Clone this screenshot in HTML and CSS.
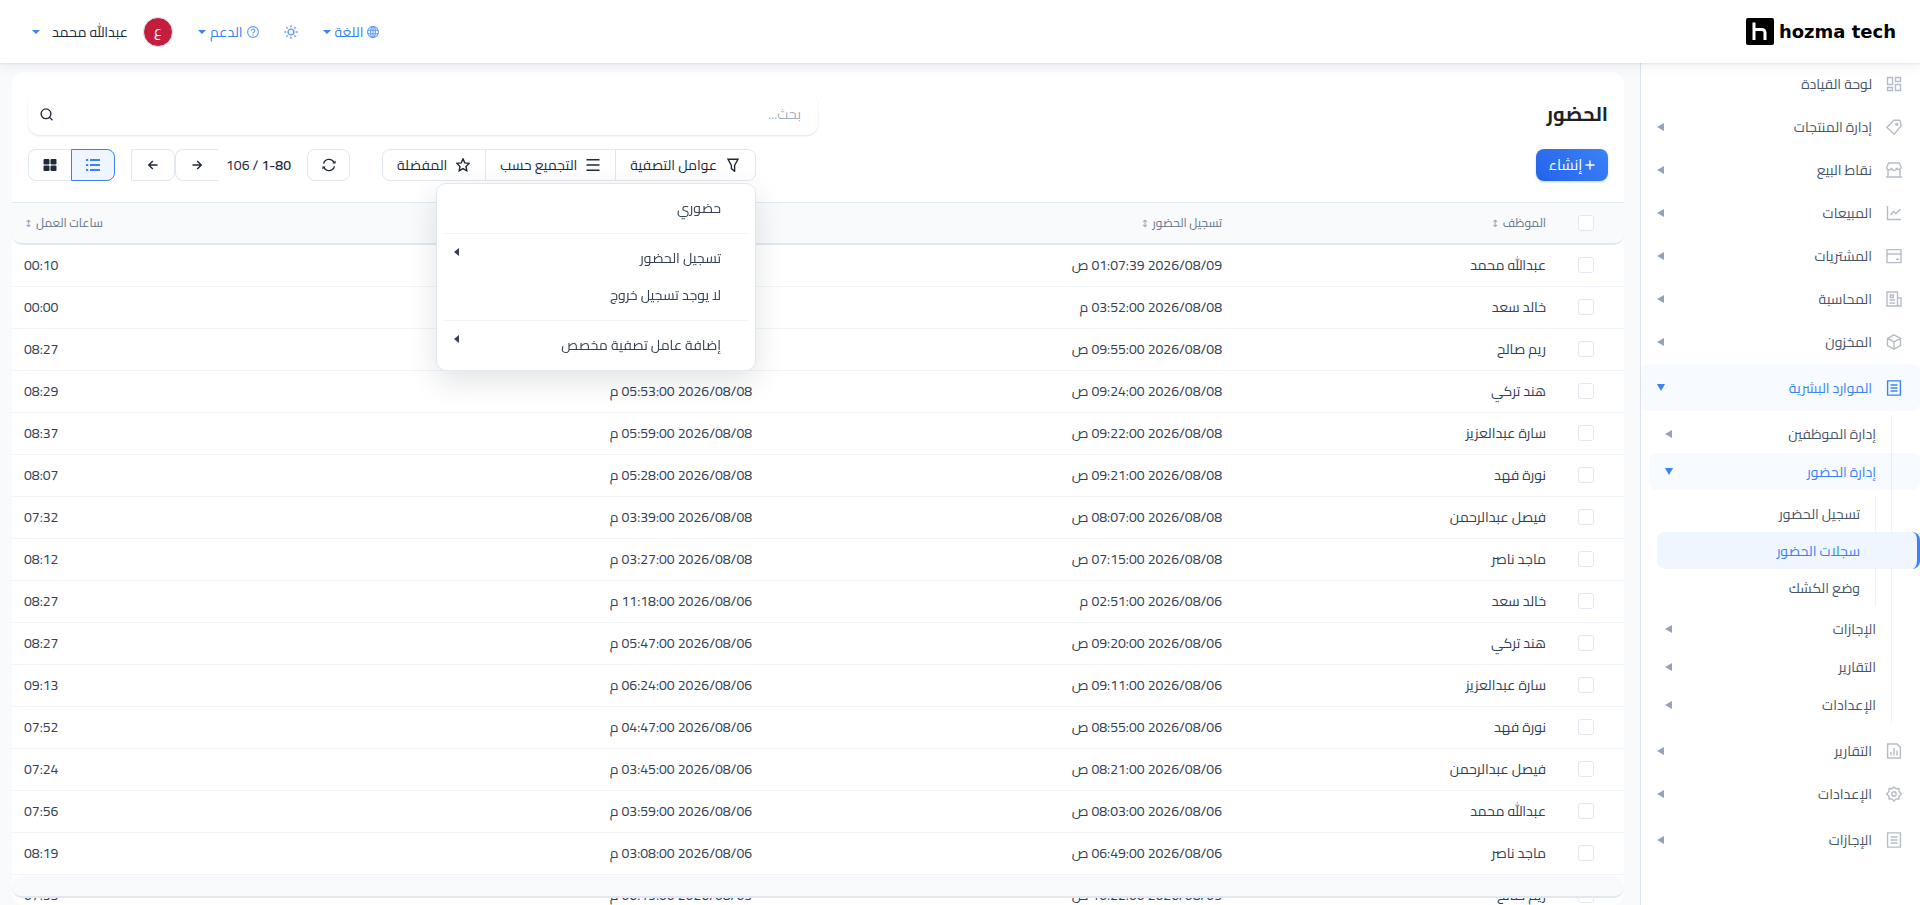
FILE: index.html
```html
<!DOCTYPE html>
<html lang="ar" dir="rtl">
<head>
<meta charset="utf-8">
<meta name="viewport" content="width=device-width, initial-scale=1">
<title>الحضور</title>
<link rel="stylesheet" href="styles.css">
</head>
<body>
<header class="topbar">
  <a class="brand" href="#" aria-label="hozma tech">
    <svg class="brand-mark" viewBox="0 0 28 28"><rect width="28" height="27" rx="2" fill="#000"/><g fill="none" stroke="#fff" stroke-width="3"><path d="M8 4.500V22"/><path d="M8 11.500h8a3 3 0 0 1 3 3V22"/></g></svg>
    <span class="brand-name">hozma tech</span>
  </a>
  <nav class="topnav">
    <button class="top-btn"><svg class="i12" viewBox="0 0 12 12"><circle cx="6" cy="6" r="5.400"/><ellipse cx="6" cy="6" rx="2.400" ry="5.400"/><path d="M.8 4.200h10.400M.8 7.800h10.400M6 .6v10.800"/></svg>اللغة<i class="caret"></i></button>
    <button class="top-btn sun" aria-label="المظهر"><svg class="i14" viewBox="0 0 14 14"><circle cx="7" cy="7" r="2.900"/><path d="M7 .3v2M7 11.700v2M.3 7h2M11.700 7h2M2.300 2.300l1.300 1.300M10.400 10.400l1.300 1.300M2.300 11.700l1.300-1.300M10.400 3.600l1.300-1.300"/></svg></button>
    <button class="top-btn"><svg class="i12" viewBox="0 0 12 12"><circle cx="6" cy="6" r="5.400"/><path d="M4.300 4.800a1.700 1.600 0 1 1 2.500 1.400c-.6.300-.8.500-.8 1.200M6 8.200v1.200"/></svg>الدعم<i class="caret"></i></button>
    <button class="user-btn"><span class="avatar">ع</span><span class="user-name">عبدالله محمد</span><i class="caret"></i></button>
  </nav>
</header>
<div class="shell">
  <aside class="sidebar">
    <ul class="menu" id="menu"></ul>
  </aside>
  <main class="content">
    <section class="card">
      <div class="page-head">
        <h1>الحضور</h1>
        <label class="search"><input type="text" placeholder="بحث..." aria-label="بحث"><button aria-label="بحث"><svg class="i13" viewBox="0 0 13 13"><circle cx="6" cy="5.800" r="4.900"/><path d="M9.600 9.400l2.800 2.800"/></svg></button></label>
      </div>
      <div class="toolbar">
        <button class="create"><svg class="i10" viewBox="0 0 10 10"><path d="M5 .5v9M.5 5h9"/></svg>إنشاء</button>
        <div class="tools">
          <div class="filters">
            <button><svg class="i14" viewBox="0 0 14 14"><path d="M2 1.300h10L8.600 7.400v5.800L5.400 10.600V7.400z"/></svg>عوامل التصفية</button>
            <button><svg class="i14" viewBox="0 0 14 14"><path d="M.5 1.800h13M.5 7h13M.5 12.200h13"/></svg>التجميع حسب</button>
            <button><svg class="i14" viewBox="0 0 14 14"><path d="M7 .9l1.800 4 4.400.5-3.200 3 .8 4.400L7 10.600l-3.800 2.200.8-4.400-3.200-3 4.400-.5z"/></svg>المفضلة</button>
            <div class="dropdown">
              <a href="#">حضوري</a>
              <hr>
              <a href="#" class="more">تسجيل الحضور</a>
              <a href="#">لا يوجد تسجيل خروج</a>
              <hr>
              <a href="#" class="more">إضافة عامل تصفية مخصص</a>
            </div>
          </div>
          <button class="box refresh" aria-label="تحديث"><svg class="i14" viewBox="0 0 14 14"><path d="M1.600 5.600A5.500 5.500 0 0 1 12 4.700M12.400 8.400A5.500 5.500 0 0 1 2 9.300"/><path fill="currentColor" stroke="none" d="M10.200 5.600h3.400V2.400zM3.800 8.400H.4v3.200z"/></svg></button>
          <div class="pager"><b>1-80</b> / 106</div>
          <button class="box prev" aria-label="السابق"><svg class="i10" viewBox="0 0 10 10"><path d="M.5 5h8.800M5.200.9L9.300 5 5.200 9.100"/></svg></button>
          <button class="box next" aria-label="التالي"><svg class="i10" viewBox="0 0 10 10"><path d="M9.500 5H.7M4.800.9L.7 5l4.100 4.100"/></svg></button>
          <button class="box list on" aria-label="قائمة"><svg class="i14" viewBox="0 0 14 14"><path stroke-width="2" d="M4 2h10M4 7h10M4 12h10M0 2h2.200M0 7h2.200M0 12h2.200"/></svg></button>
          <button class="box tiles" aria-label="بطاقات"><svg class="i14" viewBox="0 0 14 14"><g fill="currentColor" stroke="none"><rect x=".5" y="1" width="6" height="5.500" rx="1"/><rect x="7.500" y="1" width="6" height="5.500" rx="1"/><rect x=".5" y="7.500" width="6" height="5.500" rx="1"/><rect x="7.500" y="7.500" width="6" height="5.500" rx="1"/></g></svg></button>
        </div>
      </div>
      <div class="table-wrap">
        <table>
          <colgroup><col class="c-check"><col class="c-name"><col class="c-in"><col></colgroup>
          <thead><tr>
            <th class="check"><input type="checkbox" aria-label="تحديد الكل"></th>
            <th>الموظف <span class="sort">↕</span></th>
            <th>تسجيل الحضور <span class="sort">↕</span></th>
            <th></th>
            <th class="end">ساعات العمل <span class="sort">↕</span></th>
          </tr></thead>
          <tbody id="rows"></tbody>
          <tfoot><tr><td colspan="5"></td></tr></tfoot>
        </table>
      </div>
    </section>
  </main>
</div>
<script src="app.js"></script>
</body>
</html>
```
FILE: styles.css
```css
* { box-sizing: border-box; }
:root {
  --blue: #3b82f6;
  --line: #e2e8f0;
  --ink: #1e293b;
  --text: #334155;
  --font: Cairo, "Noto Kufi Arabic", "Noto Sans Arabic", Roboto, "DejaVu Sans", sans-serif;
}
body {
  margin: 0;
  height: 100vh;
  display: flex;
  flex-direction: column;
  overflow: hidden;
  background: #f8fafc;
  color: var(--text);
  font: 14px/20px var(--font);
}
button, input { font: inherit; color: inherit; }
button { background: none; border: 0; padding: 0; cursor: pointer; display: flex; align-items: center; justify-content: center; }
a { color: inherit; text-decoration: none; }
ul { list-style: none; margin: 0; padding: 0; }
svg { fill: none; stroke: currentColor; flex: none; display: block; }
.i10 { width: 10px; height: 10px; stroke-width: 1.400; }
.i12 { width: 12px; height: 12px; stroke-width: 1.100; }
.i13 { width: 13px; height: 13px; }
.i14 { width: 14px; height: 14px; stroke-width: 1.400; }
.i16 { width: 16px; height: 16px; }

.topbar {
  height: 63px;
  flex: none;
  display: flex;
  align-items: center;
  justify-content: space-between;
  padding: 0 24px 0 32px;
  background: #fff;
  box-shadow: 0 1px 2px rgba(15, 23, 42, .08), 0 4px 12px rgba(15, 23, 42, .05);
  position: relative;
  z-index: 3;
}
.brand { display: flex; align-items: center; gap: 5px; direction: ltr; color: #000; }
.brand-mark { width: 28px; height: 28px; stroke: none; }
.brand-name { font: 700 18px/28px "DejaVu Sans", sans-serif; }
.topnav { display: flex; align-items: center; gap: 25px; }
.top-btn { color: var(--blue); gap: 4px; }
.top-btn svg { opacity: .8; }
.caret { border: 4px solid transparent; border-top-color: var(--blue); border-bottom: 0; }
.user-btn { color: var(--ink); }
.avatar {
  width: 30px; height: 30px; border-radius: 50%;
  border: 1px solid var(--line);
  background: #c41e3f; color: #fff; line-height: 26px; text-align: center;
}
.user-name { margin: 0 15px 0 12px; }

.shell { flex: 1; min-height: 0; display: flex; }
.sidebar { width: 280px; flex: none; background: #fff; border-left: 1px solid #dbe4ee; overflow: hidden; color: #475569; }
.item { display: flex; align-items: center; height: 43px; padding: 0 18px 2px 16px; gap: 14px; border-radius: 8px; }
.item svg { color: #b4bccb; stroke-width: 1.400; }
.item.tall { height: 47px; padding-bottom: 0; }
.item::after { content: ""; margin-right: auto; border: 4px solid transparent; border-right: 7px solid #94a3b8; border-left: 0; }
.item.leaf::after { display: none; }
.item.open { color: var(--blue); background: rgba(59, 130, 246, .04); }
.item.open svg { color: var(--blue); }
.item.open::after { border: 4px solid transparent; border-top: 7px solid var(--blue); border-bottom: 0; }
.sub { margin: 4px 0 7px; background: linear-gradient(#eef1f5, #eef1f5) right 28px top / 1px 100% no-repeat; }
.sub .item { height: 37px; margin: 0 0 1px 8px; padding: 0 44px 0 16px; }
.deep { margin: 5px 0 4px; background: linear-gradient(#eef1f5, #eef1f5) right 44px top / 1px 100% no-repeat; }
.deep .item { margin: 0 0 0 16px; padding-right: 60px; }
.deep .item.current { color: var(--blue); background: #eff6ff; border-right: 3px solid var(--blue); padding-right: 57px; }

.content { flex: 1; min-width: 0; padding: 9px 16px 0 12px; }
.card { height: 100%; display: flex; flex-direction: column; background: #fff; border-radius: 12px; overflow: hidden; }
.page-head { display: flex; align-items: center; justify-content: space-between; padding: 20px 16px 14px; }
h1 { margin: 0; font-size: 20px; line-height: 32px; font-weight: 700; color: #1f2225; }
.search { width: 50%; height: 43px; display: flex; align-items: center; border-radius: 12px; padding: 1px 17px 0 12px; box-shadow: 0 1px 2px rgba(15, 23, 42, .12); }
.search input { flex: 1; min-width: 0; border: 0; outline: 0; background: none; padding: 0; }
.search input::placeholder { color: #a3afbf; opacity: 1; }
.search svg { stroke-width: 1.300; color: var(--ink); }

.toolbar { display: flex; justify-content: space-between; padding: 0 16px 21px; color: var(--ink); }
.create { width: 72px; height: 32px; gap: 3px; border-radius: 8px; color: #fff; font-size: 15px; background: linear-gradient(225deg, #3b82f6, #2563eb); box-shadow: 0 1px 2px rgba(37, 99, 235, .3); }
.tools { display: flex; }
.filters { position: relative; display: flex; height: 32px; border: 1px solid var(--line); border-radius: 8px; }
.filters > button { gap: 9px; padding: 0 15px 0 14px; }
.filters > button + button { border-right: 1px solid var(--line); }
.dropdown {
  position: absolute; top: 33px; right: -1px; width: 320px; z-index: 2;
  padding: 6px; background: #fff; border: 1px solid var(--line); border-radius: 10px;
  box-shadow: 0 10px 30px rgba(15, 23, 42, .12); color: var(--text);
}
.dropdown a { display: flex; justify-content: space-between; height: 37px; padding: 8px 28px 0 11px; }
.dropdown hr { border: 0; height: 1px; margin: 6px 0; background: #f1f5f9; }
.more::after { content: ""; height: 0; border: 4px solid transparent; border-right: 5px solid var(--text); border-left: 0; }
.box { width: 43px; height: 32px; border: 1px solid var(--line); }
.refresh { border-radius: 8px; margin-right: 32px; }
.pager { margin: 0 16px 0 8px; line-height: 32px; }
.pager b { font-weight: 600; }
.prev { border-right: 0; border-radius: 8px 0 0 8px; }
.next { width: 44px; border-radius: 0 8px 8px 0; }
.list { width: 44px; margin-right: 16px; border-radius: 0 8px 8px 0; }
.tiles { border-right: 0; border-radius: 8px 0 0 8px; }
.box.on { color: var(--blue); border-color: var(--blue); background: #eff6ff; }

.table-wrap { flex: 1; min-height: 0; overflow: hidden; }
table { width: 100%; table-layout: fixed; border-collapse: separate; border-spacing: 0; }
.c-check { width: 66px; }
.c-name { width: 20.1%; }
.c-in { width: 29.15%; }
th, td { height: 42px; padding: 0 12px 2px; text-align: right; white-space: nowrap; border-bottom: 1px solid #f1f5f9; }
th { height: 43px; padding-bottom: 0; background: #f8fafc; color: #64748b; font-size: 12px; font-weight: 400; border-top: 1px solid var(--line); border-bottom: 2px solid var(--line); }
th:first-child { border-bottom-right-radius: 10px; }
th:last-child { border-bottom-left-radius: 10px; }
.sort { font-size: 10px; color: #94a3b8; margin-right: 1px; }
.end { text-align: left; }
.check { padding: 0 30px 0 0; }
td.check { padding-bottom: 2px; }
.check input { appearance: none; display: block; width: 16px; height: 16px; margin: 0; border: 1px solid var(--line); border-radius: 3px; background: #fff; }
tfoot td { position: sticky; bottom: 7px; height: 22px; background: #f8fafc; border-bottom: 2px solid var(--line); border-radius: 10px; }
```
FILE: app.js
```js
const icons = {
  dash: '<path d="M1.500 1.500h5v7h-5zM9.500 1.500h5v4h-5zM1.500 11.500h5v3h-5zM9.500 8.500h5v6h-5z"/>',
  tag: '<path d="M7.800 1.200h6l1.400 5.600-7 8.400L.9 8.400z"/><circle cx="10.800" cy="5.400" r="1"/>',
  shop: '<path d="M2.500 1h11l1.700 4.300a2.300 2.300 0 0 1-4.500.5 2.600 2.600 0 0 1-5.200 0 2.300 2.300 0 0 1-4.700-.5zM2 8v6.500M14 8v6.500M0 15h16"/>',
  chart: '<path d="M1.500 1v13.500H15M4.500 10l3-3.500 2.500 2L14.500 4"/>',
  card: '<path d="M1 1.600h14v13H1zM1 6h14M10 11.200h3"/>',
  news: '<path d="M1 1h10.500v14H1zM11.500 7H15v8h-3.500M3.500 9h5.500M3.500 12h5.500M4.300 4h3v2.500h-3z"/>',
  cube: '<path d="M8 .8l6.500 3.500v7.400L8 15.200l-6.500-3.500V4.300zM1.500 4.300L8 7.900l6.500-3.600M8 7.900v7.300"/>',
  doc: '<path d="M1.600.9h12.800v14.200H1.600zM4.500 5h7M4.500 8h7M4.500 11h7"/>',
  report: '<path d="M1.600 1h9.400l3.400 3.400V15H1.600zM5 9v3.500M8 5v7.500M11 7.500v5"/>',
  gear: '<circle cx="8" cy="8" r="2.200"/><path d="M8 .9l2 1.900 2.900-.2.200 2.900L15.200 8l-2.100 2.200-.2 2.800-2.900-.1L8 15.100 6 12.900l-2.900.1-.2-2.800L.8 8l2.100-2.500.2-2.900 2.900.2z"/>'
};
const menu = [
  ['dash', 'لوحة القيادة', 'leaf'],
  ['tag', 'إدارة المنتجات'],
  ['shop', 'نقاط البيع'],
  ['chart', 'المبيعات'],
  ['card', 'المشتريات'],
  ['news', 'المحاسبة'],
  ['cube', 'المخزون'],
  ['doc', 'الموارد البشرية', 'tall open', [
    ['', 'إدارة الموظفين'],
    ['', 'إدارة الحضور', 'open', [
      ['', 'تسجيل الحضور', 'leaf'],
      ['', 'سجلات الحضور', 'leaf current'],
      ['', 'وضع الكشك', 'leaf']
    ]],
    ['', 'الإجازات'],
    ['', 'التقارير'],
    ['', 'الإعدادات']
  ]],
  ['report', 'التقارير'],
  ['gear', 'الإعدادات'],
  ['doc', 'الإجازات', 'tall']
];
const level = ['', 'sub', 'deep'];
const build = (items, depth) => items.map(([icon, label, state = '', children]) =>
  `<li><a href="#" class="item ${state}">${icon ? `<svg class="i16" viewBox="0 0 16 16">${icons[icon]}</svg>` : ''}${label}</a>` +
  (children ? `<ul class="${level[depth + 1]}">${build(children, depth + 1)}</ul>` : '') + '</li>').join('');
document.getElementById('menu').innerHTML = build(menu, 0);

const rows = [
  ['عبدالله محمد', '2026/08/09 01:07:39 ص', '', '00:10'],
  ['خالد سعد', '2026/08/08 03:52:00 م', '', '00:00'],
  ['ريم صالح', '2026/08/08 09:55:00 ص', '', '08:27'],
  ['هند تركي', '2026/08/08 09:24:00 ص', '2026/08/08 05:53:00 م', '08:29'],
  ['سارة عبدالعزيز', '2026/08/08 09:22:00 ص', '2026/08/08 05:59:00 م', '08:37'],
  ['نورة فهد', '2026/08/08 09:21:00 ص', '2026/08/08 05:28:00 م', '08:07'],
  ['فيصل عبدالرحمن', '2026/08/08 08:07:00 ص', '2026/08/08 03:39:00 م', '07:32'],
  ['ماجد ناصر', '2026/08/08 07:15:00 ص', '2026/08/08 03:27:00 م', '08:12'],
  ['خالد سعد', '2026/08/06 02:51:00 م', '2026/08/06 11:18:00 م', '08:27'],
  ['هند تركي', '2026/08/06 09:20:00 ص', '2026/08/06 05:47:00 م', '08:27'],
  ['سارة عبدالعزيز', '2026/08/06 09:11:00 ص', '2026/08/06 06:24:00 م', '09:13'],
  ['نورة فهد', '2026/08/06 08:55:00 ص', '2026/08/06 04:47:00 م', '07:52'],
  ['فيصل عبدالرحمن', '2026/08/06 08:21:00 ص', '2026/08/06 03:45:00 م', '07:24'],
  ['عبدالله محمد', '2026/08/06 08:03:00 ص', '2026/08/06 03:59:00 م', '07:56'],
  ['ماجد ناصر', '2026/08/06 06:49:00 ص', '2026/08/06 03:08:00 م', '08:19'],
  ['ريم صالح', '2026/08/05 10:22:00 ص', '2026/08/05 06:15:00 م', '07:53']
];
document.getElementById('rows').innerHTML = rows.map(r =>
  `<tr><td class="check"><input type="checkbox" aria-label="${r[0]}"></td><td>${r[0]}</td><td>${r[1]}</td><td>${r[2]}</td><td class="end">${r[3]}</td></tr>`).join('');
```
